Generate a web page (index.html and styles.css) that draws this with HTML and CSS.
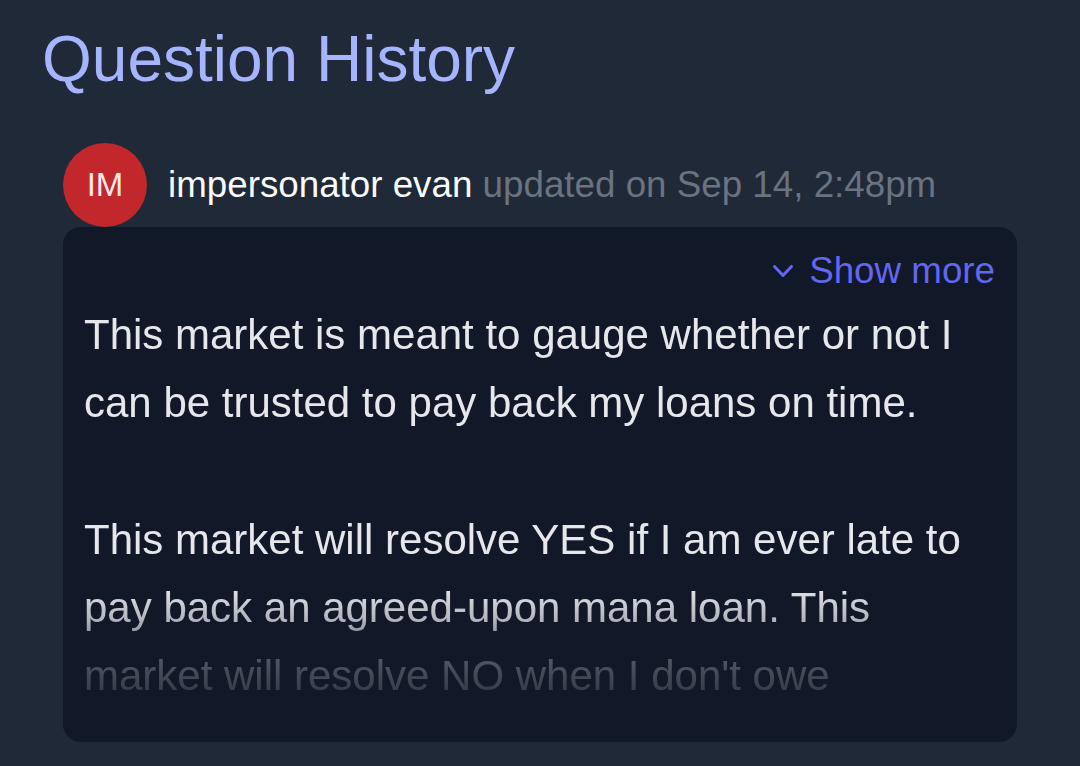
FILE: index.html
```html
<!DOCTYPE html>
<html lang="en">
<head>
<meta charset="utf-8">
<title>Question History</title>
<link rel="stylesheet" href="styles.css">
</head>
<body>
<div class="page">
  <h1 class="title">Question History</h1>
  <div class="entry">
    <div class="entry-head">
      <div class="avatar">IM</div>
      <div class="meta"><span class="name">impersonator evan</span> <span class="when">updated on Sep 14, 2:48pm</span></div>
    </div>
    <div class="card">
      <div class="card-top">
        <button class="toggle" type="button">
          <svg class="chev" viewBox="0 0 20 20" aria-hidden="true"><path fill="currentColor" fill-rule="evenodd" d="M5.23 7.21a.75.75 0 011.06.02L10 11.168l3.71-3.938a.75.75 0 111.08 1.04l-4.25 4.5a.75.75 0 01-1.08 0l-4.25-4.5a.75.75 0 01.02-1.06z"/></svg>
          <span>Show more</span>
        </button>
      </div>
      <div class="desc">
        <p>This market is meant to gauge whether or not I can be trusted to pay back my loans on time.</p>
        <p>This market will resolve YES if I am ever late to pay back an agreed-upon mana loan. This market will resolve NO when I don't owe</p>
      </div>
    </div>
  </div>
</div>
</body>
</html>
```

FILE: styles.css
```css
* { box-sizing: border-box; }

html, body {
  margin: 0;
  padding: 0;
  background: #1f2937;
  font-family: "Liberation Sans", Arial, sans-serif;
}

.page {
  padding: 17px 0 0 42px;
  min-height: 766px;
}

.title {
  margin: 0;
  font-size: 64px;
  line-height: 84px;
  font-weight: 400;
  color: #a5b4fc;
}

.entry {
  margin: 42px 63px 0 21px;
}

.entry-head {
  display: flex;
  align-items: center;
  gap: 21px;
}

.avatar {
  width: 84px;
  height: 84px;
  flex: none;
  border-radius: 50%;
  background: #c1272b;
  color: #fde8e8;
  display: flex;
  align-items: center;
  justify-content: center;
  font-size: 33px;
}

.meta {
  font-size: 36.75px;
  line-height: 52px;
  white-space: nowrap;
}

.name { color: #f9fafb; }
.when { color: #6b7280; }

.card {
  background: #111827;
  border-radius: 18px;
  padding: 18px 22px 31px 21px;
}

.card-top {
  display: flex;
  justify-content: flex-end;
}

.toggle {
  display: flex;
  align-items: center;
  gap: 6px;
  background: none;
  border: 0;
  padding: 0;
  margin: 0;
  font-family: inherit;
  font-size: 36.75px;
  line-height: 52px;
  color: #6366f1;
  cursor: pointer;
}

.chev {
  width: 40px;
  height: 40px;
  display: block;
}

.desc {
  margin-top: 4px;
  max-height: 410px;
  overflow: hidden;
  color: #e5e7eb;
  font-size: 42px;
  line-height: 68.25px;
  -webkit-mask-image: linear-gradient(to bottom, #000 0, #000 calc(100% - 125px), rgba(0,0,0,0.75) calc(100% - 90px), rgba(0,0,0,0.3) calc(100% - 53px), rgba(0,0,0,0.1) 100%);
  mask-image: linear-gradient(to bottom, #000 0, #000 calc(100% - 125px), rgba(0,0,0,0.75) calc(100% - 90px), rgba(0,0,0,0.3) calc(100% - 53px), rgba(0,0,0,0.1) 100%);
}

.desc p {
  margin: 0 0 68.25px;
}

.desc p:last-child {
  margin-bottom: 0;
}
```
